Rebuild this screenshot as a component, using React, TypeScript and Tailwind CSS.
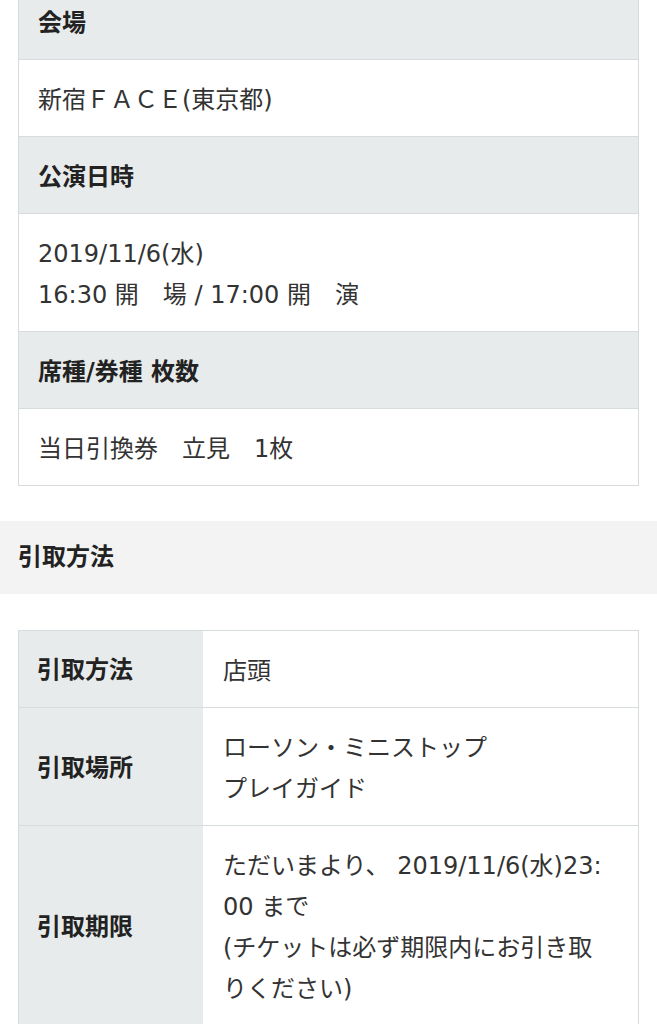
const font = "font-['DejaVu_Sans','Noto_Sans_CJK_JP',sans-serif]";

function HeadRow({ children }: { children: React.ReactNode }) {
  return (
    <div className="bg-[#e7ebeb] px-[19px] pt-[19.5px] pb-[15.5px] text-[24px] leading-[41px] font-bold text-[#222]">
      {children}
    </div>
  );
}

function ValueRow({ children }: { children: React.ReactNode }) {
  return (
    <div className="bg-white px-[19px] pt-[19.5px] pb-[15.5px] text-[24px] leading-[41px] text-[#333]">
      {children}
    </div>
  );
}

function PairRow({ label, children }: { label: string; children: React.ReactNode }) {
  return (
    <div className="grid grid-cols-[184px_1fr]">
      <div className="flex items-center bg-[#e7ebeb] px-[18px] pt-[2px] text-[24px] font-bold text-[#222]">
        {label}
      </div>
      <div className="bg-white px-[20px] pt-[19.5px] pb-[15.5px] text-[24px] leading-[41px] text-[#333] whitespace-nowrap">
        {children}
      </div>
    </div>
  );
}

export default function App() {
  return (
    <div className={`${font} bg-white min-h-screen w-[657px] overflow-hidden`}>
      <div className="-mt-[18px]">
        <div className="mx-[18px] border border-[#d6dbdd] divide-y divide-[#d6dbdd]">
          <HeadRow>会場</HeadRow>
          <ValueRow>新宿ＦＡＣＥ(東京都)</ValueRow>
          <HeadRow>公演日時</HeadRow>
          <ValueRow>
            2019/11/6(水)
            <br />
            16:30 開　場 / 17:00 開　演
          </ValueRow>
          <HeadRow>席種/券種 枚数</HeadRow>
          <ValueRow>当日引換券　立見　1枚</ValueRow>
        </div>

        <div className="mt-[35px] bg-[#f3f3f3] px-[18px] py-[16px] text-[24px] leading-[41px] font-bold text-[#222]">
          引取方法
        </div>

        <div className="mt-[36px] mx-[18px] border border-[#d6dbdd] divide-y divide-[#d6dbdd]">
          <PairRow label="引取方法">店頭</PairRow>
          <PairRow label="引取場所">
            ローソン・ミニストップ
            <br />
            プレイガイド
          </PairRow>
          <PairRow label="引取期限">
            ただいまより、 2019/11/6(水)23:
            <br />
            00 まで
            <br />
            (チケットは必ず期限内にお引き取
            <br />
            りください)
          </PairRow>
        </div>
      </div>
    </div>
  );
}
